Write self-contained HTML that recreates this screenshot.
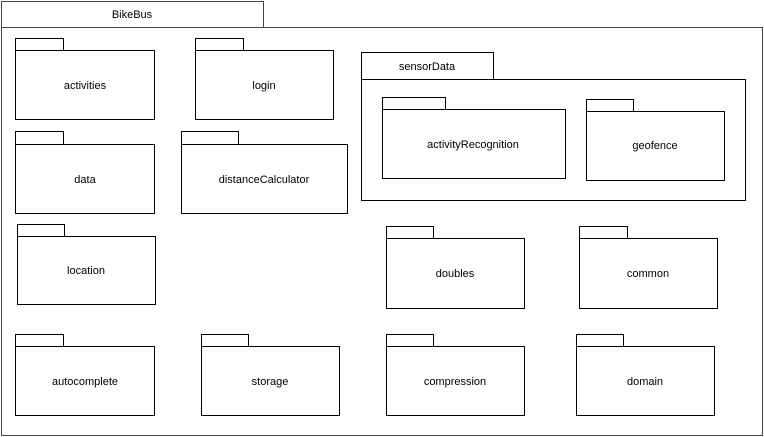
<!DOCTYPE html>
<html><head><meta charset="utf-8"><style>
html,body{margin:0;padding:0;background:#fff;width:764px;height:437px;overflow:hidden}
svg{display:block}
text{font-family:"Liberation Sans",sans-serif;font-size:11px;fill:#000;text-anchor:middle}
rect{fill:none;stroke:#000;stroke-width:1}
</style></head><body>
<svg width="764" height="437" viewBox="0 0 764 437">
<rect x="1.5" y="1.5" width="262" height="26" style="stroke:#444"/>
<rect x="1.5" y="27.5" width="761" height="408" style="stroke:#444"/>
<text x="132" y="18">BikeBus</text>

<rect x="15.5" y="38.5" width="48" height="12"/><rect x="15.5" y="50.5" width="139" height="69"/><text x="85" y="89">activities</text>
<rect x="195.5" y="38.5" width="48" height="12"/><rect x="195.5" y="50.5" width="138" height="69"/><text x="264" y="89">login</text>
<rect x="15.5" y="131.5" width="48" height="13"/><rect x="15.5" y="144.5" width="139" height="69"/><text x="85" y="183">data</text>
<rect x="181.5" y="131.5" width="57" height="13"/><rect x="181.5" y="144.5" width="166" height="69"/><text x="264" y="183">distanceCalculator</text>

<rect x="361.5" y="52.5" width="132" height="27"/><rect x="361.5" y="79.5" width="384" height="121"/><text x="427" y="70">sensorData</text>
<rect x="382.5" y="97.5" width="63" height="12"/><rect x="382.5" y="109.5" width="183" height="69"/><text x="473" y="148">activityRecognition</text>
<rect x="586.5" y="99.5" width="47" height="12"/><rect x="586.5" y="111.5" width="138" height="69"/><text x="655" y="149">geofence</text>

<rect x="17.5" y="224.5" width="47" height="12"/><rect x="17.5" y="236.5" width="138" height="68"/><text x="86" y="274">location</text>
<rect x="386.5" y="226.5" width="47" height="12"/><rect x="386.5" y="238.5" width="138" height="70"/><text x="455" y="277">doubles</text>
<rect x="579.5" y="226.5" width="48" height="12"/><rect x="579.5" y="238.5" width="138" height="70"/><text x="648" y="277">common</text>

<rect x="15.5" y="334.5" width="48" height="12"/><rect x="15.5" y="346.5" width="139" height="69"/><text x="85" y="385">autocomplete</text>
<rect x="201.5" y="334.5" width="47" height="12"/><rect x="201.5" y="346.5" width="138" height="69"/><text x="270" y="385">storage</text>
<rect x="386.5" y="334.5" width="47" height="12"/><rect x="386.5" y="346.5" width="138" height="69"/><text x="455" y="385">compression</text>
<rect x="576.5" y="334.5" width="47" height="12"/><rect x="576.5" y="346.5" width="138" height="69"/><text x="645" y="385">domain</text>
</svg>
</body></html>
